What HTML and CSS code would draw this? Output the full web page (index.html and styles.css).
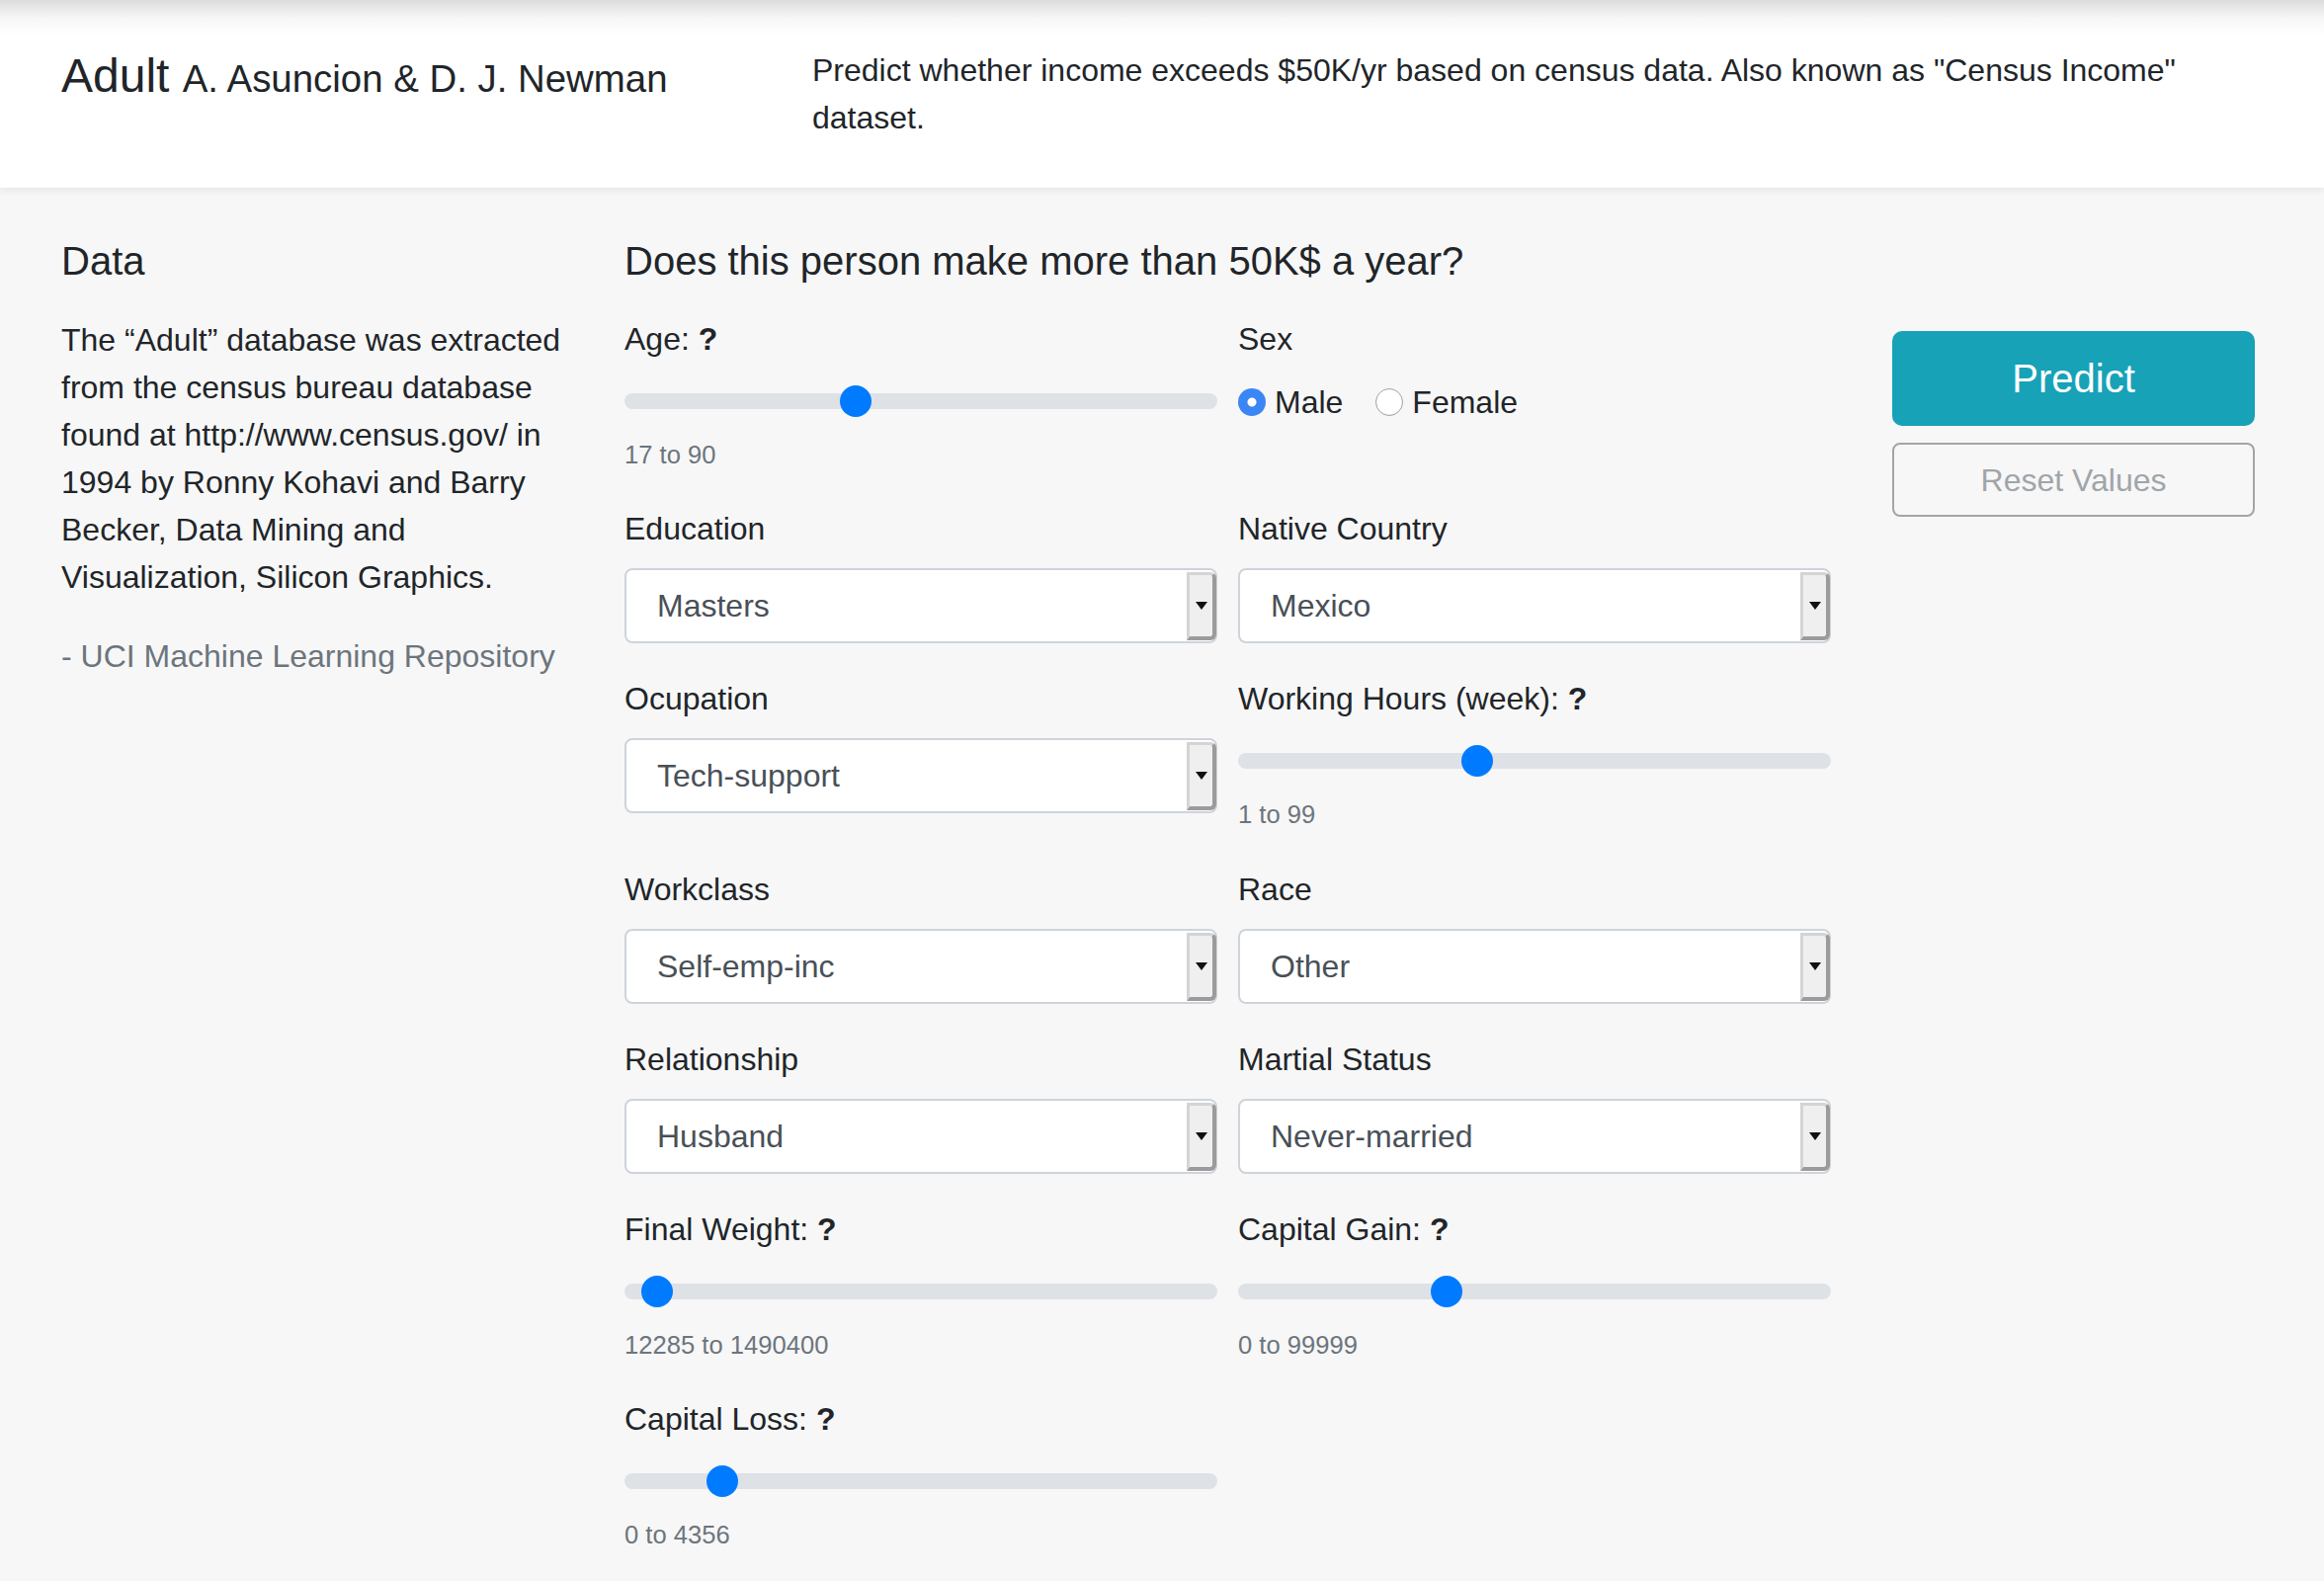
FILE: index.html
```html
<!DOCTYPE html>
<html lang="en">
<head>
<meta charset="utf-8">
<title>Adult - Census Income</title>
<link rel="stylesheet" href="styles.css">
</head>
<body>
<header class="topbar">
  <div class="brand"><h4 class="title">Adult <small>A. Asuncion &amp; D. J. Newman</small></h4></div>
  <p class="desc">Predict whether income exceeds $50K/yr based on census data. Also known as "Census Income" dataset.</p>
</header>
<main class="main">
  <section class="col-data">
    <h5 class="heading heading-data">Data</h5>
    <p class="about">The “Adult” database was extracted from the census bureau database found at http://www.census.gov/ in 1994 by Ronny Kohavi and Barry Becker, Data Mining and Visualization, Silicon Graphics.</p>
    <p class="source">- UCI Machine Learning Repository</p>
  </section>
  <section class="col-form">
    <h5 class="heading heading-q">Does this person make more than 50K$ a year?</h5>
    <div class="form-grid">
      <div class="group">
        <label class="lbl">Age: <b>?</b></label>
        <input class="range" type="range" min="17" max="90" step="1" value="45">
        <small class="hint">17 to 90</small>
      </div>
      <div class="group">
        <label class="lbl">Sex</label>
        <div class="radio-row">
          <label class="radio-opt"><input class="radio" type="radio" name="sex" checked> Male</label>
          <label class="radio-opt"><input class="radio" type="radio" name="sex"> Female</label>
        </div>
      </div>
      <div class="group">
        <label class="lbl">Education</label>
        <div class="select"><span class="select-val">Masters</span><span class="select-btn"><span class="caret"></span></span></div>
      </div>
      <div class="group">
        <label class="lbl">Native Country</label>
        <div class="select"><span class="select-val">Mexico</span><span class="select-btn"><span class="caret"></span></span></div>
      </div>
      <div class="group">
        <label class="lbl">Ocupation</label>
        <div class="select"><span class="select-val">Tech-support</span><span class="select-btn"><span class="caret"></span></span></div>
      </div>
      <div class="group">
        <label class="lbl">Working Hours (week): <b>?</b></label>
        <input class="range" type="range" min="1" max="99" step="1" value="40">
        <small class="hint">1 to 99</small>
      </div>
      <div class="group">
        <label class="lbl">Workclass</label>
        <div class="select"><span class="select-val">Self-emp-inc</span><span class="select-btn"><span class="caret"></span></span></div>
      </div>
      <div class="group">
        <label class="lbl">Race</label>
        <div class="select"><span class="select-val">Other</span><span class="select-btn"><span class="caret"></span></span></div>
      </div>
      <div class="group">
        <label class="lbl">Relationship</label>
        <div class="select"><span class="select-val">Husband</span><span class="select-btn"><span class="caret"></span></span></div>
      </div>
      <div class="group">
        <label class="lbl">Martial Status</label>
        <div class="select"><span class="select-val">Never-married</span><span class="select-btn"><span class="caret"></span></span></div>
      </div>
      <div class="group">
        <label class="lbl">Final Weight: <b>?</b></label>
        <input class="range" type="range" min="12285" max="1490400" step="1" value="56325">
        <small class="hint">12285 to 1490400</small>
      </div>
      <div class="group">
        <label class="lbl">Capital Gain: <b>?</b></label>
        <input class="range" type="range" min="0" max="99999" step="1" value="34277">
        <small class="hint">0 to 99999</small>
      </div>
      <div class="group">
        <label class="lbl">Capital Loss: <b>?</b></label>
        <input class="range" type="range" min="0" max="4356" step="1" value="636">
        <small class="hint">0 to 4356</small>
      </div>
    </div>
  </section>
  <section class="col-actions">
    <button class="btn btn-predict" type="button">Predict</button>
    <button class="btn btn-reset" type="button" disabled>Reset Values</button>
  </section>
</main>
</body>
</html>
```
FILE: styles.css
```css
* { box-sizing: border-box; }
html, body { margin: 0; padding: 0; }
body {
  background: #f7f7f7;
  color: #212529;
  font-family: "Liberation Sans", Arial, Helvetica, sans-serif;
  font-size: 32px;
  line-height: 48px;
}

.topbar {
  display: flex;
  height: 190px;
  padding: 48px 60px 0 62px;
  background: linear-gradient(#dcdcdc 0px, #f6f6f6 18px, #ffffff 36px);
  box-shadow: 0 3px 7px rgba(0, 0, 0, 0.07);
  position: relative;
}
.brand { width: 760px; flex: none; }
.title {
  margin: 0;
  font-size: 48px;
  line-height: 57.6px;
  font-weight: 400;
}
.title small { font-size: 38.4px; font-weight: 400; }
.desc { margin: -1px 0 0 0; flex: 1; font-size: 32px; line-height: 48px; }

.main {
  display: flex;
  align-items: flex-start;
  padding: 50px 0 0 62px;
}
.col-data { width: 538px; flex: none; margin-right: 32px; }
.col-form { width: 1221px; flex: none; margin-right: 62px; }
.col-actions { width: 367px; flex: none; padding-top: 95px; }

.heading {
  margin: 0;
  font-size: 40px;
  line-height: 48px;
  font-weight: 400;
}
.heading-data { margin-bottom: 32px; }
.heading-q { margin-bottom: 31px; }

.about { margin: 0 0 32px 0; }
.source { margin: 0; color: #6c757d; }

.form-grid {
  display: grid;
  grid-template-columns: 600px 600px;
  column-gap: 21px;
}
.group { margin-bottom: 32px; }
.lbl { display: block; margin-bottom: 16px; line-height: 48px; }
.lbl b { font-weight: 700; }

.range {
  -webkit-appearance: none;
  appearance: none;
  display: block;
  width: 100%;
  height: 46px;
  margin: 0;
  padding: 0;
  background: transparent;
}
.range:focus { outline: none; }
.range::-webkit-slider-runnable-track {
  height: 16px;
  border: 0;
  border-radius: 16px;
  background: #dee2e6;
}
.range::-webkit-slider-thumb {
  -webkit-appearance: none;
  appearance: none;
  width: 32px;
  height: 32px;
  margin-top: -8px;
  border: 0;
  border-radius: 50%;
  background: #007bff;
}
.hint {
  display: block;
  margin-top: 12px;
  font-size: 25.6px;
  line-height: 38.4px;
  color: #6c757d;
}

.radio-row { display: flex; align-items: center; height: 48px; }
.radio-opt { display: flex; align-items: center; margin-right: 33px; }
.radio {
  -webkit-appearance: none;
  appearance: none;
  width: 28px;
  height: 28px;
  margin: 0 9px 0 0;
  border-radius: 50%;
  background: #ffffff;
  border: 1px solid #a2a2a2;
  box-shadow: inset 0 -1px 1px rgba(0, 0, 0, 0.06);
}
.radio:checked {
  border: 0;
  background: radial-gradient(circle at center, #ffffff 0, #ffffff 4px, #3b86f5 5px);
  box-shadow: none;
}

.select {
  display: flex;
  height: 76px;
  border: 2px solid #ced4da;
  border-radius: 8px;
  background: #ffffff;
  color: #495057;
}
.select-val {
  flex: 1;
  padding-left: 31px;
  line-height: 72px;
}
.select-btn {
  flex: none;
  width: 30px;
  margin: 2px -1px 1px 0;
  display: flex;
  align-items: center;
  justify-content: center;
  background: #efefef;
  border-top: 3px solid #d4d4d4;
  border-left: 3px solid #d4d4d4;
  border-right: 4px solid #9b9b9b;
  border-bottom: 4px solid #9b9b9b;
  border-radius: 0 6px 6px 0;
}
.caret {
  width: 0;
  height: 0;
  border-left: 6px solid transparent;
  border-right: 6px solid transparent;
  border-top: 8px solid #111111;
}

.btn {
  display: block;
  width: 100%;
  font-family: inherit;
  text-align: center;
  cursor: pointer;
}
.btn-predict {
  height: 96px;
  border: 2px solid #17a2b8;
  border-radius: 10px;
  background: #17a2b8;
  color: #ffffff;
  font-size: 40px;
  line-height: 60px;
  padding: 16px 32px;
}
.btn-reset {
  margin-top: 17px;
  height: 75px;
  border: 2px solid #a0a5a9;
  border-radius: 8px;
  background: transparent;
  color: #a0a5a9;
  font-size: 32px;
  line-height: 48px;
  padding: 12px 24px;
}
```
